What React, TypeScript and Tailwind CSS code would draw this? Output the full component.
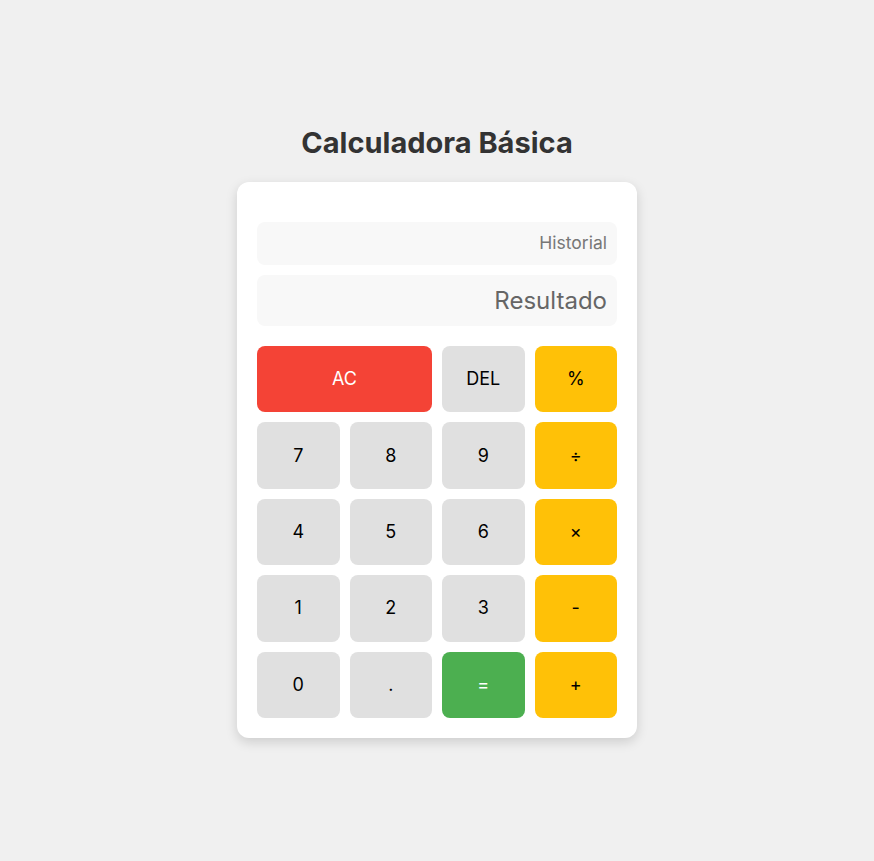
import React from 'react'

const keys = [
  { label: 'AC', kind: 'clear', span: true },
  { label: 'DEL', kind: 'num' },
  { label: '%', kind: 'op' },
  { label: '7', kind: 'num' },
  { label: '8', kind: 'num' },
  { label: '9', kind: 'num' },
  { label: '÷', kind: 'op' },
  { label: '4', kind: 'num' },
  { label: '5', kind: 'num' },
  { label: '6', kind: 'num' },
  { label: '×', kind: 'op' },
  { label: '1', kind: 'num' },
  { label: '2', kind: 'num' },
  { label: '3', kind: 'num' },
  { label: '-', kind: 'op' },
  { label: '0', kind: 'num' },
  { label: '.', kind: 'num' },
  { label: '=', kind: 'eq' },
  { label: '+', kind: 'op' },
]

const kindClass: Record<string, string> = {
  clear: 'bg-[#f44336] text-white',
  num: 'bg-[#e0e0e0] text-black',
  op: 'bg-[#ffc107] text-black',
  eq: 'bg-[#4caf50] text-white',
}

const App = () => {
  return (
    <div className="min-h-screen bg-[#f0f0f0] flex flex-col items-center font-['Inter',sans-serif]">
      <h1 className="mt-[126px] mb-[22px] text-[29px] leading-[34px] font-bold text-[#333]">Calculadora Básica</h1>

      <div className="w-[400px] bg-white rounded-xl shadow-[0_4px_12px_rgba(0,0,0,0.15)] px-5 pt-10 pb-5">
        <div className="h-[43px] bg-[#f8f8f8] rounded-lg flex items-center justify-end px-[10px] text-[17.5px] text-[#777]">
          Historial
        </div>
        <div className="mt-[10px] h-[51px] bg-[#f8f8f8] rounded-lg flex items-center justify-end px-[10px] text-2xl text-[#666]">
          Resultado
        </div>

        <div className="mt-5 grid grid-cols-4 gap-[10px]">
          {keys.map(k => (
            <button
              key={k.label}
              className={`h-[66.4px] rounded-lg flex items-center justify-center text-lg ${kindClass[k.kind]} ${k.span ? 'col-span-2' : ''}`}
            >
              {k.label}
            </button>
          ))}
        </div>
      </div>
    </div>
  )
}

export default App
